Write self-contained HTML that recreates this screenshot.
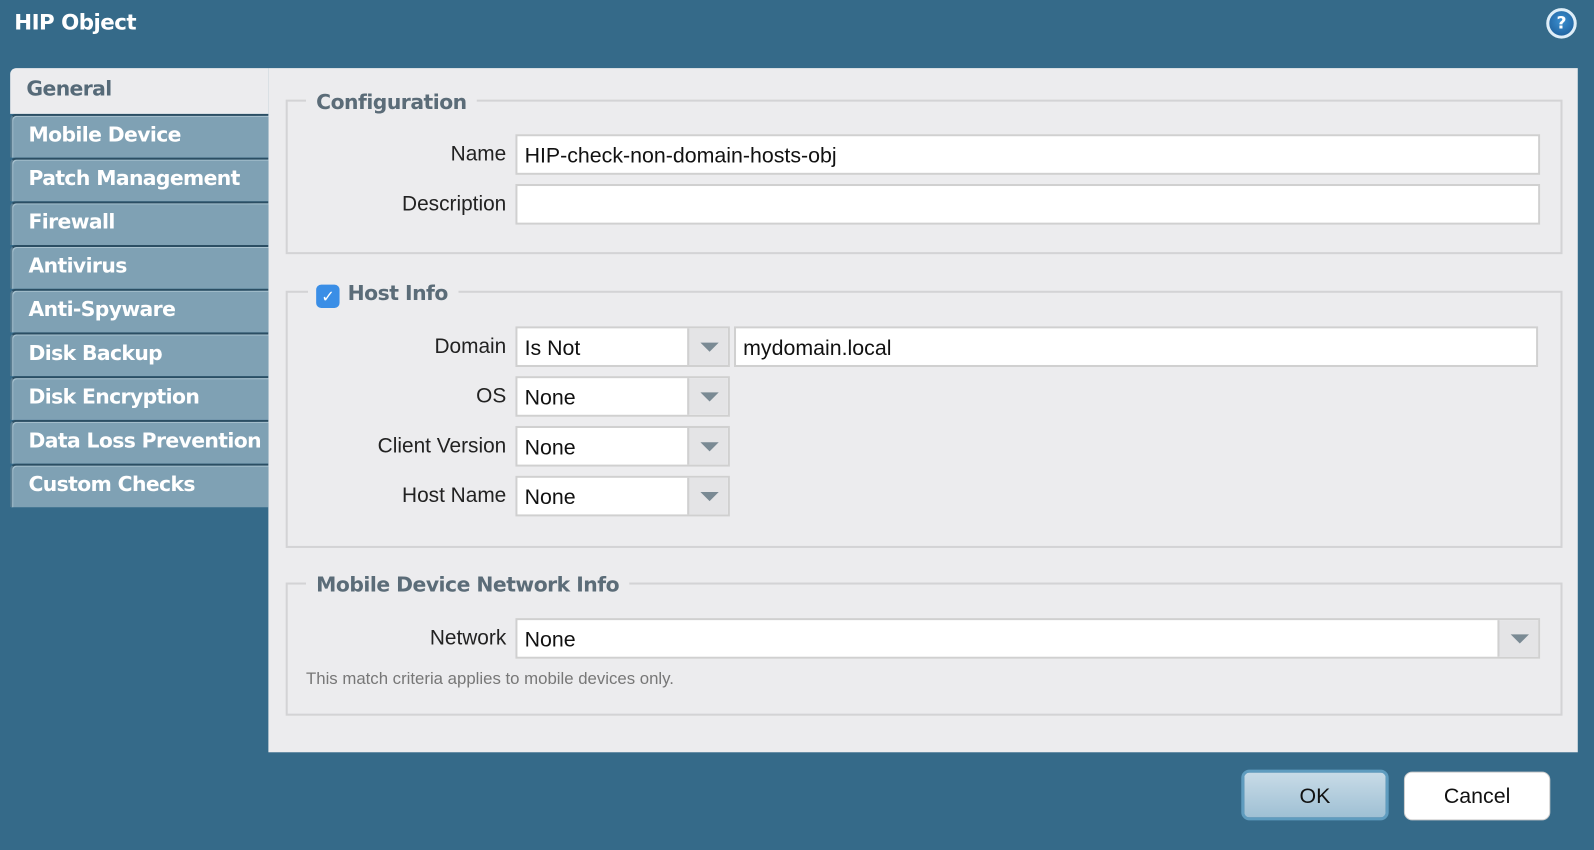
<!DOCTYPE html>
<html><head><meta charset="utf-8"><style>
*{box-sizing:border-box;margin:0;padding:0}
body{width:1594px;height:850px;background:#356a89;position:relative;overflow:hidden;font-family:"Liberation Sans",sans-serif}
#w{position:absolute;left:0;top:0;width:1568px;height:836px;transform:scale(1.0166);transform-origin:0 0}
.abs{position:absolute}
.title{left:14px;top:10px;color:#fff;font:bold 21px "DejaVu Sans",sans-serif;letter-spacing:-0.5px}
.help{left:1521px;top:8px;width:30px;height:30px;border-radius:50%;background:radial-gradient(circle at 50% 40%,#3b8fd0,#1b5a95);border:3px solid #dfeef8;color:#fff;font:bold 17px "DejaVu Sans",sans-serif;text-align:center;line-height:24px}
.panel{left:264px;top:67px;width:1288px;height:673px;background:#ececee}
.tab{position:absolute;left:10px;width:254px;height:43px;background:#7fa1b4;border-top:2px solid #2b4e63;border-left:2px solid #5b7e92;border-radius:6px 0 0 0;color:#fff;font:bold 20px "DejaVu Sans",sans-serif;letter-spacing:-0.6px;padding:6px 0 0 16px;box-shadow:inset 1px 1px 0 #a9c2cf;white-space:nowrap;overflow:hidden}
.tab.act{background:#ececee;color:#566a78;border:none;top:67px;height:45px;padding-top:8px;box-shadow:none;left:10px}
fieldset{position:absolute;border:2px solid #d3d3d5;}
.leg{position:absolute;background:#ececee;color:#5b6c78;font:bold 20px "DejaVu Sans",sans-serif;letter-spacing:-0.5px;padding:0 10px}
.lbl{position:absolute;width:200px;text-align:right;font-size:20.5px;color:#222}
.inp{position:absolute;height:40px;background:#fff;border:2px solid #d0d0d0;font-size:21px;color:#111;padding:8px 0 0 7px}
.dd{position:absolute;top:0;right:0;width:40px;height:36px;background:#e4e4e6;border-left:2px solid #d0d0d0}
.dd:after{content:"";position:absolute;left:11px;top:14px;border-left:9px solid transparent;border-right:9px solid transparent;border-top:9px solid #7a8a94}
.btn{position:absolute;height:50px;border-radius:8px;font-size:21px;text-align:center;line-height:48px;color:#111}
</style></head><body><div id="w">
<div class="abs title">HIP Object</div>
<div class="abs help">?</div>
<div class="abs panel"></div>
<div class="tab" style="top:112px">Mobile Device</div>
<div class="tab" style="top:155px">Patch Management</div>
<div class="tab" style="top:198px">Firewall</div>
<div class="tab" style="top:241px">Antivirus</div>
<div class="tab" style="top:284px">Anti-Spyware</div>
<div class="tab" style="top:327px">Disk Backup</div>
<div class="tab" style="top:370px">Disk Encryption</div>
<div class="tab" style="top:413px">Data Loss Prevention</div>
<div class="tab" style="top:456px">Custom Checks</div>
<div class="tab act">General</div>

<fieldset style="left:281px;top:98px;width:1256px;height:152px"></fieldset>
<div class="leg" style="left:301px;top:88px">Configuration</div>
<div class="lbl" style="left:298px;top:140px">Name</div>
<div class="inp" style="left:507px;top:132px;width:1008px">HIP-check-non-domain-hosts-obj</div>
<div class="lbl" style="left:298px;top:189px">Description</div>
<div class="inp" style="left:507px;top:181px;width:1008px"></div>

<fieldset style="left:281px;top:286px;width:1256px;height:253px"></fieldset>
<div class="leg" style="left:303px;top:276px;padding-left:8px"><span style="display:inline-block;width:23px;height:23px;border-radius:5px;background:#3a8ee6;color:#fff;font-size:16px;text-align:center;line-height:23px;vertical-align:-2px;margin-right:8px">✓</span>Host Info</div>
<div class="lbl" style="left:298px;top:329px">Domain</div>
<div class="inp" style="left:507px;top:321px;width:211px">Is Not<div class="dd"></div></div>
<div class="inp" style="left:722px;top:321px;width:791px">mydomain.local</div>
<div class="lbl" style="left:298px;top:378px">OS</div>
<div class="inp" style="left:507px;top:370px;width:211px">None<div class="dd"></div></div>
<div class="lbl" style="left:298px;top:427px">Client Version</div>
<div class="inp" style="left:507px;top:419px;width:211px">None<div class="dd"></div></div>
<div class="lbl" style="left:298px;top:476px">Host Name</div>
<div class="inp" style="left:507px;top:468px;width:211px">None<div class="dd"></div></div>

<fieldset style="left:281px;top:573px;width:1256px;height:131px"></fieldset>
<div class="leg" style="left:301px;top:563px">Mobile Device Network Info</div>
<div class="lbl" style="left:298px;top:616px">Network</div>
<div class="inp" style="left:507px;top:608px;width:1008px">None<div class="dd"></div></div>
<div class="abs" style="left:301px;top:659px;font-size:16.5px;color:#777">This match criteria applies to mobile devices only.</div>

<div class="btn" style="left:1221px;top:757px;width:145px;background:linear-gradient(#c8dbe7,#9fc0d4);border:3px solid #5f9cbf">OK</div>
<div class="btn" style="left:1381px;top:759px;width:144px;height:48px;background:#fff;border:1px solid #ccc">Cancel</div>
</div></body></html>
